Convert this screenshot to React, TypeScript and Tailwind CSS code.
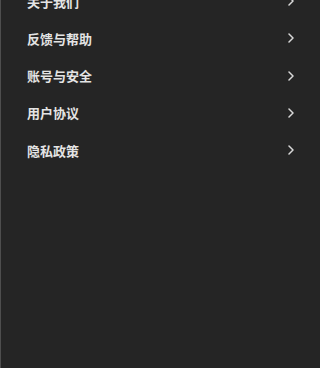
import React from 'react'

const items = ['关于我们', '反馈与帮助', '账号与安全', '用户协议', '隐私政策']

function Chevron() {
  return (
    <svg width="8" height="10" viewBox="0 0 8 10" fill="none" className="shrink-0">
      <path d="M2 1l4 4-4 4" stroke="#d8d8d8" strokeWidth="1.5" strokeLinecap="round" strokeLinejoin="round" />
    </svg>
  )
}

export default function App() {
  return (
    <div
      className="w-[320px] h-[368px] overflow-hidden bg-[#252525] border-l border-[#4e4e4e]"
      style={{ fontFamily: '"Noto Sans CJK SC", "Noto Sans", sans-serif' }}
    >
      <div className="-mt-[17.5px] flex flex-col">
        {items.map((label) => (
          <div key={label} className="h-[37.25px] flex items-center justify-between pl-[26px] pr-[25px]">
            <span className="text-[13px] font-semibold text-[#e4e4e4] leading-none">{label}</span>
            <Chevron />
          </div>
        ))}
      </div>
    </div>
  )
}
